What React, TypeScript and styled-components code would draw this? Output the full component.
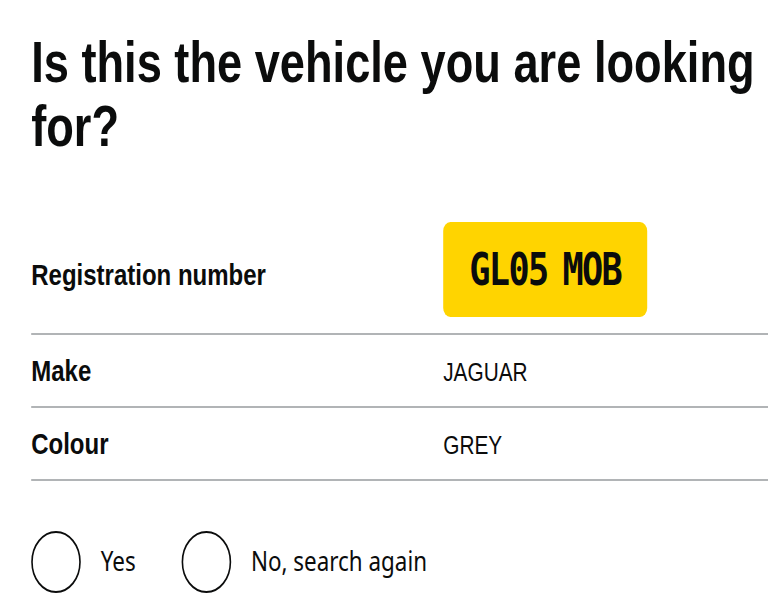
import React from "react";
import styled, { createGlobalStyle } from "styled-components";

const GlobalStyle = createGlobalStyle`
  html, body {
    margin: 0;
    padding: 0;
    background: #ffffff;
    overflow: hidden;
  }
  body {
    font-family: "Liberation Sans", Arial, sans-serif;
    color: #0b0c0c;
  }
`;

const Page = styled.main`
  width: 960px;
  box-sizing: border-box;
  padding: 31px 0 0 39px;
  transform: scaleX(0.8);
  transform-origin: 0 0;
`;

const Heading = styled.h1`
  margin: 0 0 47px 0;
  font-family: "Liberation Sans", Arial, sans-serif;
  font-weight: 700;
  font-size: 56.5px;
  line-height: 64px;
  color: #0b0c0c;
`;

const SummaryList = styled.dl`
  margin: 0;
  padding: 0;
`;

const Row = styled.div`
  display: flex;
  align-items: baseline;
  padding: 16px 0;
  border-bottom: 2px solid #b1b4b6;
`;

const Key = styled.dt`
  width: 515px;
  flex: none;
  margin: 0;
  font-family: "Liberation Sans", Arial, sans-serif;
  font-weight: 700;
  font-size: 30px;
  line-height: 39px;
`;

const Value = styled.dd`
  margin: 0;
  flex: 1;
  font-family: "Liberation Sans", Arial, sans-serif;
  font-weight: 400;
  font-size: 26px;
  line-height: 26px;
`;

const Plate = styled.span`
  display: inline-block;
  width: 255px;
  box-sizing: border-box;
  padding: 22px 0;
  background: #ffd400;
  border-radius: 9px;
  text-align: center;
  font-family: "DejaVu Sans Mono", "Liberation Mono", monospace;
  font-weight: 700;
  font-size: 44px;
  line-height: 51px;
  letter-spacing: -2px;
  word-spacing: -6px;
  color: #0b0c0c;
`;

const Radios = styled.div`
  display: flex;
  align-items: center;
  gap: 57px;
  margin-top: 50px;
`;

const RadioItem = styled.label`
  display: flex;
  align-items: center;
  gap: 25px;
  cursor: pointer;
`;

const RadioCircle = styled.span`
  display: block;
  width: 62px;
  height: 62px;
  box-sizing: border-box;
  border: 2px solid #0b0c0c;
  border-radius: 50%;
  background: #ffffff;
`;

const RadioLabel = styled.span`
  font-family: "Noto Sans", "Open Sans", sans-serif;
  font-weight: 400;
  font-size: 28px;
  line-height: 36px;
  color: #0b0c0c;
  margin-top: -5px;
`;

export default function App() {
  return (
    <>
      <GlobalStyle />
      <Page>
        <Heading>Is this the vehicle you are looking for?</Heading>
        <SummaryList>
          <Row>
            <Key>Registration number</Key>
            <Value>
              <Plate>GL05 MOB</Plate>
            </Value>
          </Row>
          <Row>
            <Key>Make</Key>
            <Value>JAGUAR</Value>
          </Row>
          <Row>
            <Key>Colour</Key>
            <Value>GREY</Value>
          </Row>
        </SummaryList>
        <Radios>
          <RadioItem>
            <RadioCircle />
            <RadioLabel>Yes</RadioLabel>
          </RadioItem>
          <RadioItem>
            <RadioCircle />
            <RadioLabel>No, search again</RadioLabel>
          </RadioItem>
        </Radios>
      </Page>
    </>
  );
}
